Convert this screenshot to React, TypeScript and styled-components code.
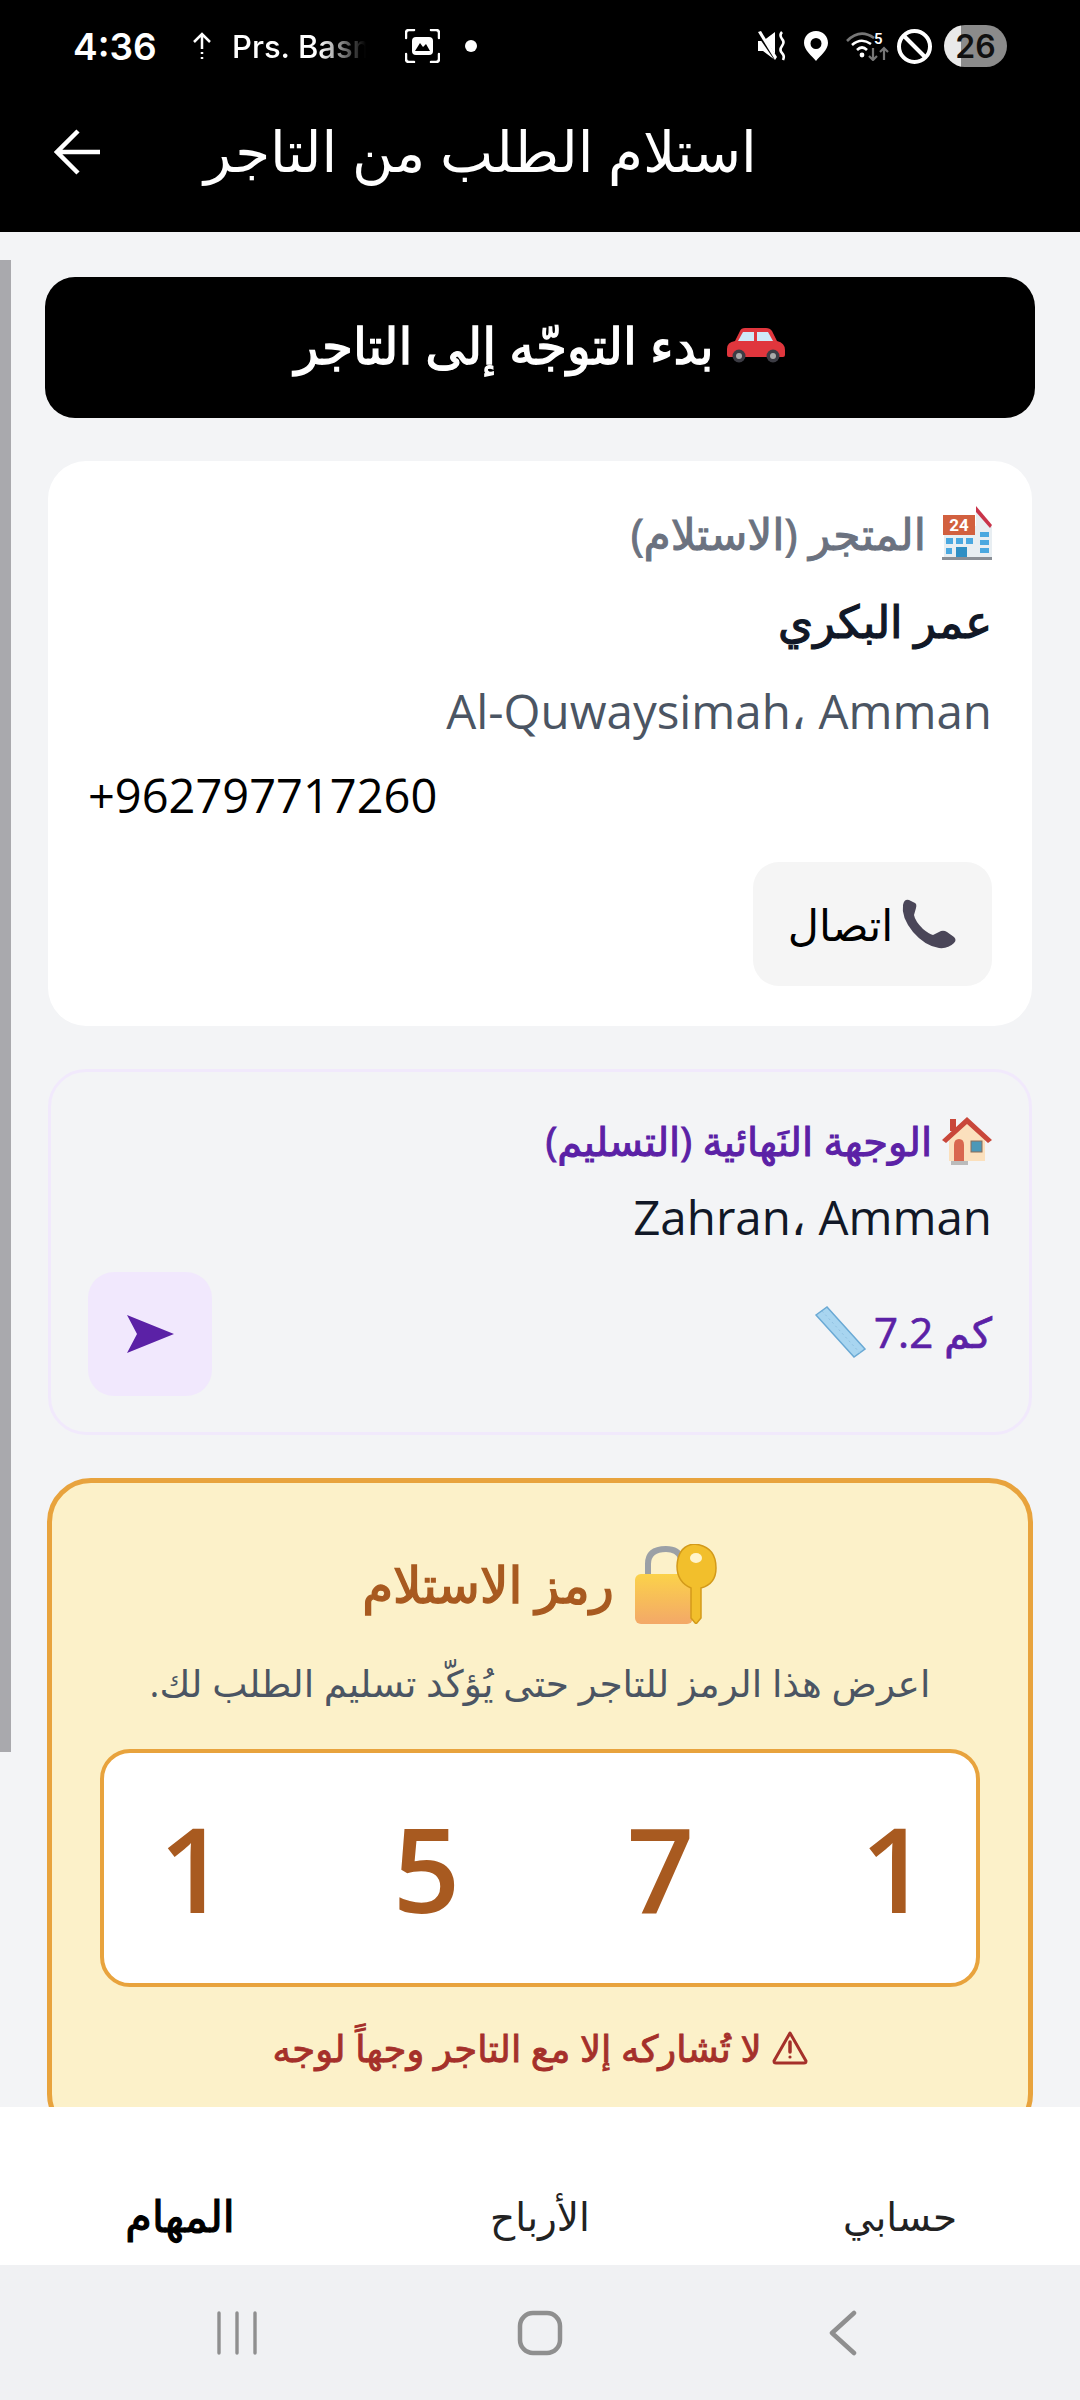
import React from "react";
import styled, { createGlobalStyle } from "styled-components";

const Global = createGlobalStyle`
  html, body { margin: 0; padding: 0; background: #f3f4f6; }
  #root { width: 1080px; height: 2400px; }
  * { box-sizing: border-box; }
`;
const FONT = `"Open Sans", "Noto Sans", "DejaVu Sans", sans-serif`;

const Screen = styled.div`
  width: 1080px; height: 2400px; display: flex; flex-direction: column;
  font-family: ${FONT}; background: #f3f4f6; overflow: hidden;
`;
const StatusBar = styled.div`
  height: 80px; flex: none; background: #000; color: #fff; display: flex; align-items: center;
  justify-content: space-between; padding: 12px 73px 0 73px; direction: ltr;
  font-family: Inter, Roboto, sans-serif;
`;
const StatusGroup = styled.div`display: flex; align-items: center;`;
const StatusIcon = styled.svg<{ $gap?: number }>`margin-left: ${p => p.$gap ?? 0}px; flex: none;`;
const Clock = styled.span`font-size: 37px; font-weight: 600; width: 120px;`;
const Ticker = styled.span`
  font-size: 31px; font-weight: 500; width: 134px; white-space: nowrap; margin-left: 21px;
  -webkit-mask-image: linear-gradient(90deg, #000 65%, transparent 100%);
  mask-image: linear-gradient(90deg, #000 65%, transparent 100%);
`;
const StatusDot = styled.span`width: 12px; height: 12px; border-radius: 50%; background: #fff; margin-left: 25px;`;
const Battery = styled.span`
  width: 63px; height: 42px; border-radius: 21px; margin-left: 12px; color: #111;
  background: linear-gradient(90deg, #e9e9e9 27%, #8b8b8b 27%);
  display: flex; align-items: center; justify-content: center; font-size: 32px; font-weight: 600;
`;
const Header = styled.header`
  height: 152px; flex: none; background: #000; color: #fff; display: flex; align-items: center;
  direction: ltr; padding: 0 0 8px 54px;
`;
const Title = styled.h1`
  margin: 0 0 4px 103px; font-size: 56.5px; font-weight: 400; direction: rtl; white-space: nowrap;
`;
const Main = styled.main`
  position: relative; flex: 1; min-height: 0; overflow: hidden; direction: rtl;
  padding: 45px 45px 0; display: flex; flex-direction: column; align-items: stretch;
`;
const ScrollThumb = styled.div`
  position: absolute; left: 0; top: 28px; width: 11px; height: 1492px; background: #a9a9ad;
`;
const PrimaryButton = styled.button`
  height: 141px; flex: none; border: 0; border-radius: 30px; background: #000; color: #fff; padding: 0 0 6px;
  font: 400 50px ${FONT}; -webkit-text-stroke: 1.3px #fff; display: flex; align-items: center; justify-content: center; gap: 12px; direction: rtl;
`;
const Card = styled.section`
  flex: none; margin: 43px 3px 0; padding: 45px 40px 40px; border-radius: 38px; background: #fff;
  display: flex; flex-direction: column; align-items: stretch;
`;
const DestCard = styled(Card)`
  background: transparent; border: 3px solid #f1e9fc; padding: 42px 37px 37px; height: 366px;
`;
const SectionLabel = styled.div<{ $color: string; $size: number; $gap: number }>`
  display: flex; align-items: center; gap: ${p => p.$gap}px; font-size: ${p => p.$size}px; font-weight: 400; color: ${p => p.$color};
  -webkit-text-stroke: 1px ${p => p.$color}; line-height: 54px;
`;
const StoreName = styled.div`
  font-size: 45px; font-weight: 400; -webkit-text-stroke: 1.2px #111827; color: #111827; margin-top: 28px; line-height: 66px;
`;
const Address = styled.div<{ $color: string; $gap: number }>`
  font-size: 47.5px; color: ${p => p.$color}; line-height: 64px; margin-top: ${p => p.$gap}px;
`;
const Phone = styled.div`font-size: 47px; color: #000; direction: ltr; text-align: left; line-height: 64px; margin-top: 20px;`;
const CallButton = styled.button`
  align-self: flex-start; width: 239px; height: 124px; margin-top: 35px; border: 0; border-radius: 26px; background: #f5f5f5;
  color: #000; font: 400 43px ${FONT}; display: flex; align-items: center; justify-content: center; gap: 8px; direction: rtl;
`;
const DestRow = styled.div`display: flex; align-items: center; justify-content: space-between; margin-top: 23px;`;
const Distance = styled.div`
  display: flex; align-items: center; gap: 8px; font-size: 42px; font-weight: 400; -webkit-text-stroke: 0.7px #5b21a6; color: #5b21a6; line-height: 60px; padding-bottom: 4px;
`;
const NavButton = styled.button`
  width: 124px; height: 124px; border: 0; border-radius: 26px; background: #f1e8fd; display: flex; align-items: center; justify-content: center; padding: 0;
`;
const CodeCard = styled.section`
  flex: none; margin: 43px 2px 0; height: 660px; padding: 60px 48px 0; border: 5px solid #e8a33d; border-radius: 44px; background: #fcf1c9;
  display: flex; flex-direction: column; align-items: stretch;
`;
const CodeTitle = styled.div`
  display: flex; align-items: center; justify-content: center; gap: 20px; font-size: 50px; font-weight: 400; -webkit-text-stroke: 1.4px #a85a20; color: #a85a20; height: 82px;
`;
const CodeHint = styled.p`margin: 32px 0 0; text-align: center; font-size: 37.5px; color: #4b5563; line-height: 52px;`;
const CodeBox = styled.div`
  margin-top: 40px; height: 238px; background: #fff; border: 4px solid #e8a33d; border-radius: 30px; direction: ltr;
  display: flex; align-items: center; justify-content: space-between; padding: 0 48px 0 55px;
`;
const Digit = styled.span`font-size: 118px; font-weight: 600; color: #a85a20; line-height: 1;`;
const CodeWarning = styled.div`
  margin-top: 35px; display: flex; align-items: center; justify-content: center; gap: 10px; font-size: 37px; font-weight: 400; -webkit-text-stroke: 0.9px #a5302a; color: #a5302a;
`;
const TabBar = styled.nav`
  height: 158px; flex: none; background: #fff; display: grid; grid-template-columns: repeat(3, 1fr); direction: rtl; align-items: center; padding-top: 58px;
`;
const Tab = styled.span<{ $active?: boolean }>`
  text-align: center; font-size: ${p => (p.$active ? 43 : 39)}px; font-weight: 400; color: ${p => (p.$active ? "#000" : "#222")};
  ${p => (p.$active ? "-webkit-text-stroke: 1.2px #000;" : "")}
`;
const SystemNav = styled.div`
  height: 135px; flex: none; background: #f0f1f3; display: grid; grid-template-columns: repeat(3, 1fr); align-items: center; padding: 0 85px;
  justify-items: center;
`;

const Car = () => (
  <svg width="60" height="36" viewBox="0 0 60 36">
    <path d="M14 4 Q15 1 19 1 H40 Q44 1 46 4 L51 14 Q59 16 59 23 V28 Q59 30 57 30 H3 Q1 30 1 28 V22 Q1 15 9 14Z" fill="#e0363d" />
    <path d="M17 5 H28 V14 H12Z" fill="#cfe9f7" /><path d="M31 5 H42 L47 14 H31Z" fill="#cfe9f7" />
    <circle cx="13" cy="29" r="6.5" fill="#3c3c44" /><circle cx="13" cy="29" r="3" fill="#aaa" />
    <circle cx="47" cy="29" r="6.5" fill="#3c3c44" /><circle cx="47" cy="29" r="3" fill="#aaa" />
  </svg>
);
const Hotel = () => (
  <svg width="50" height="54" viewBox="0 0 50 54">
    <path d="M34 1 L50 20 V52 H34Z" fill="#e8eef2" /><path d="M34 0 L50 19 L48 22 L34 6Z" fill="#c9344a" />
    <rect x="2" y="20" width="34" height="32" fill="#e8eef2" /><rect x="1" y="9" width="32" height="20" fill="#d2603f" />
    <text x="17" y="25" fontSize="17" fontWeight="700" textAnchor="middle" fill="#fff" fontFamily="Roboto">24</text>
    {[4, 14, 24].map(x => <rect key={x} x={x} y="32" width="7" height="6" fill="#4aa8e0" />)}
    <rect x="4" y="42" width="6" height="6" fill="#4aa8e0" /><rect x="14" y="41" width="11" height="11" fill="#2f8fc4" />
    <rect x="38" y="26" width="9" height="5" fill="#4aa8e0" /><rect x="38" y="34" width="9" height="5" fill="#4aa8e0" /><rect x="38" y="42" width="9" height="5" fill="#4aa8e0" />
    <rect x="0" y="51" width="50" height="3" fill="#8a8f96" />
  </svg>
);
const Handset = () => (
  <svg width="56" height="50" viewBox="0 0 56 50">
    <path d="M2 6 Q3 0 8 1 L14 4 Q16 5 15 9 L13 16 Q14 22 22 30 Q28 35 32 36 L40 32 Q43 31 46 33 L53 38 Q56 41 53 44 Q47 50 38 49 Q24 47 12 33 Q0 18 2 6Z" fill="#4a4658" />
  </svg>
);
const House = () => (
  <svg width="50" height="48" viewBox="0 0 50 48">
    <path d="M7 20 L25 2 L43 20 V44 H7Z" fill="#fbe0bd" /><path d="M0 23 L25 0 L50 23 L46 26 L25 7 L4 26Z" fill="#c9473a" />
    <rect x="8" y="2" width="6" height="12" fill="#c9473a" />
    <path d="M12 44 V28 Q12 22 17 22 Q22 22 22 28 V44Z" fill="#d9674f" /><rect x="29" y="24" width="11" height="11" fill="#4c98b8" stroke="#8d6c58" />
    <rect x="9" y="44" width="17" height="4" fill="#bbb" />
  </svg>
);
const Ruler = () => (
  <svg width="51" height="52" viewBox="0 0 51 52">
    <path d="M1 9 L12 1 L50 43 L39 51Z" fill="#a8d5f0" stroke="#6aa9d4" strokeWidth="1.5" /><path d="M7 5 L45 47" stroke="#8fc0e0" strokeWidth="1" strokeDasharray="2 3" />
  </svg>
);
const LockKey = () => (
  <svg width="84" height="80" viewBox="0 0 84 80">
    <path d="M14 34 V20 Q14 5 32 5 Q44 5 47 14" fill="none" stroke="#9ba0a6" strokeWidth="6" />
    <defs><linearGradient id="lockg" x1="0" y1="0" x2="0" y2="1"><stop offset="0" stopColor="#fbd24a" /><stop offset="1" stopColor="#f3a868" /></linearGradient></defs>
    <rect x="1" y="30" width="58" height="50" rx="6" fill="url(#lockg)" />
    <path d="M60 0 Q82 2 82 24 Q82 40 67 44 V74 L62 80 L57 74 V44 Q43 38 43 22 Q44 2 60 0Z" fill="#f2bf2c" stroke="#d39a1a" strokeWidth="1.5" />
    <ellipse cx="62" cy="14" rx="6" ry="5" fill="#fff4cc" />
  </svg>
);
const WarningIcon = () => (
  <svg width="36" height="34" viewBox="0 0 36 34" fill="none" stroke="#a5302a" strokeWidth="3" strokeLinejoin="round">
    <path d="M18 2 L34 30 Q34 32 32 32 H4 Q2 32 2 30Z" /><path d="M18 11 V21" strokeWidth="3.5" strokeLinecap="round" /><circle cx="18" cy="26" r="1.6" fill="#a5302a" stroke="none" />
  </svg>
);

export default function App() {
  return (
    <Screen>
      <Global />
      <StatusBar>
        <StatusGroup>
          <Clock>4:36</Clock>
          <StatusIcon width="18" height="28" viewBox="0 0 18 28" fill="none" stroke="#fff" strokeWidth="2.5"><path d="M1 10 L9 2 L17 10M9 2 V17M9 20 V22M9 25 V27" /></StatusIcon>
          <Ticker>Prs. Basm</Ticker>
          <StatusIcon $gap={39} width="35" height="34" viewBox="0 0 35 34" fill="none" stroke="#fff" strokeWidth="2.5" strokeLinecap="round">
            <path d="M1 9 V4 Q1 1 4 1 H9M26 1 H31 Q34 1 34 4 V9M34 25 V30 Q34 33 31 33 H26M9 33 H4 Q1 33 1 30 V25" />
            <rect x="7" y="8" width="21" height="18" rx="4" fill="#fff" stroke="none" /><path d="M10 22 L15 14 L18 18 L21 15 L25 22Z" fill="#000" stroke="none" />
          </StatusIcon>
          <StatusDot />
        </StatusGroup>
        <StatusGroup>
          <StatusIcon width="30" height="30" viewBox="0 0 30 30" fill="#fff"><path d="M0 10 H5 L17 1 V29 L5 20 H0Z" /><path d="M-1 0 L18 28" stroke="#000" strokeWidth="4" /><path d="M0 1 L3 0 L19 26 L17 29Z" /><path d="M24 1 Q21 4 24 8 Q27 11 24 15 Q21 19 24 22 Q27 25 25 29" fill="none" stroke="#fff" strokeWidth="2.6" /></StatusIcon>
          <StatusIcon $gap={16} width="24" height="30" viewBox="0 0 24 30"><path fillRule="evenodd" fill="#fff" d="M12 0 C5 0 0 5 0 12 C0 19 8 25 12 30 C16 25 24 19 24 12 C24 5 19 0 12 0Z M12 7 A5.5 5.5 0 1 1 12 18 A5.5 5.5 0 1 1 12 7Z" /></StatusIcon>
          <StatusIcon $gap={18} width="43" height="30" viewBox="0 0 43 30" fill="none">
            <path d="M1 10 Q14 -3 28 7" stroke="#777" strokeWidth="2.6" /><path d="M6 14 Q15 6 25 13" stroke="#fff" strokeWidth="2.6" /><path d="M11 19 Q16 14 21 19" stroke="#fff" strokeWidth="2.6" /><circle cx="16" cy="24" r="2.4" fill="#fff" />
            <text x="28" y="13" fontSize="15" fontWeight="600" fill="#fff" fontFamily="Roboto">5</text>
            <path d="M27 17 V29M23 25 L27 29 L31 25" stroke="#777" strokeWidth="2.2" /><path d="M38 29 V17M34 21 L38 17 L42 21" stroke="#777" strokeWidth="2.2" />
          </StatusIcon>
          <StatusIcon $gap={8} width="35" height="35" viewBox="0 0 35 35" fill="none" stroke="#fff" strokeWidth="4"><circle cx="17.5" cy="17.5" r="15.5" /><path d="M7 7 L28 28" /></StatusIcon>
          <Battery>26</Battery>
        </StatusGroup>
      </StatusBar>
      <Header>
        <svg width="47" height="46" viewBox="0 0 47 46" fill="none" stroke="#fff" strokeWidth="4.5"><path d="M24 2 L3 23 L24 44M3 23 H46" /></svg>
        <Title>استلام الطلب من التاجر</Title>
      </Header>
      <Main>
        <ScrollThumb />
        <PrimaryButton><Car />بدء التوجّه إلى التاجر</PrimaryButton>
        <Card>
          <SectionLabel $color="#6b7280" $size={44} $gap={16}><Hotel />المتجر (الاستلام)</SectionLabel>
          <StoreName>عمر البكري</StoreName>
          <Address $color="#4b5563" $gap={25}>Al-Quwaysimah، Amman</Address>
          <Phone>+962797717260</Phone>
          <CallButton><Handset />اتصال</CallButton>
        </Card>
        <DestCard>
          <SectionLabel $color="#5b21a6" $size={40} $gap={10}><House />الوجهة النَهائية (التسليم)</SectionLabel>
          <Address $color="#111827" $gap={17}>Zahran، Amman</Address>
          <DestRow>
            <Distance>كم 7.2<Ruler /></Distance>
            <NavButton><svg width="47" height="38" viewBox="0 0 47 38"><path d="M0 0 L47 19 L0 38 L10 19Z" fill="#5b21a6" /></svg></NavButton>
          </DestRow>
        </DestCard>
        <CodeCard>
          <CodeTitle><LockKey />رمز الاستلام</CodeTitle>
          <CodeHint>اعرض هذا الرمز للتاجر حتى يُؤكّد تسليم الطلب لك.</CodeHint>
          <CodeBox><Digit>1</Digit><Digit>5</Digit><Digit>7</Digit><Digit>1</Digit></CodeBox>
          <CodeWarning><WarningIcon />لا تُشاركه إلا مع التاجر وجهاً لوجه</CodeWarning>
        </CodeCard>
      </Main>
      <TabBar>
        <Tab>حسابي</Tab>
        <Tab>الأرباح</Tab>
        <Tab $active>المهام</Tab>
      </TabBar>
      <SystemNav>
        <svg width="42" height="44" viewBox="0 0 42 44" stroke="#8f8f8f" strokeWidth="3.4" strokeLinecap="round"><path d="M3 2 V42M21 2 V42M39 2 V42" /></svg>
        <svg width="46" height="46" viewBox="0 0 46 46" fill="none" stroke="#8f8f8f" strokeWidth="4.5"><rect x="3" y="3" width="40" height="40" rx="13" /></svg>
        <svg width="30" height="46" viewBox="0 0 30 46" fill="none" stroke="#8f8f8f" strokeWidth="4.5" strokeLinecap="round" strokeLinejoin="round"><path d="M26 3 L4 23 L26 43" /></svg>
      </SystemNav>
    </Screen>
  );
}
